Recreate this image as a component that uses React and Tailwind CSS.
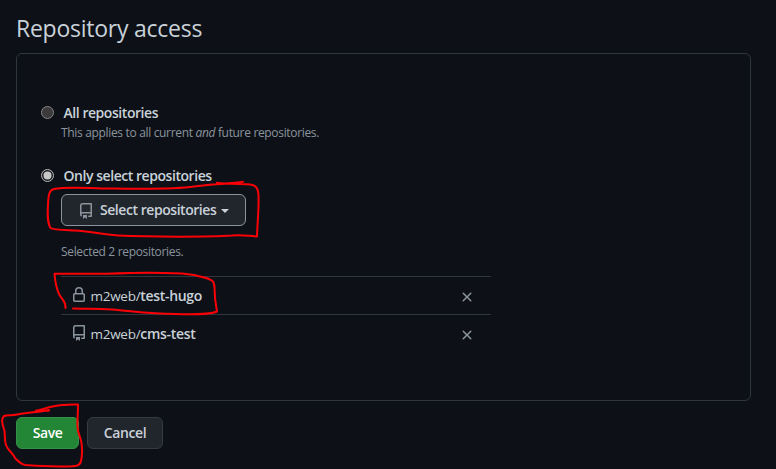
function RepoIcon({ className }) {
  return (
    <svg viewBox="0 0 16 16" width="16" height="16" fill="currentColor" className={className}>
      <path d="M2 2.5A2.5 2.5 0 0 1 4.5 0h8.75a.75.75 0 0 1 .75.75v12.5a.75.75 0 0 1-.75.75h-2.5a.75.75 0 0 1 0-1.5h1.75v-2h-8a1 1 0 0 0-.714 1.7.75.75 0 1 1-1.072 1.05A2.495 2.495 0 0 1 2 11.5Zm10.5-1h-8a1 1 0 0 0-1 1v6.708A2.486 2.486 0 0 1 4.5 9h8ZM5 12.25a.25.25 0 0 1 .25-.25h3.5a.25.25 0 0 1 .25.25v3.25a.25.25 0 0 1-.4.2l-1.45-1.087a.249.249 0 0 0-.3 0L5.4 15.7a.25.25 0 0 1-.4-.2Z" />
    </svg>
  );
}

function LockIcon({ className }) {
  return (
    <svg viewBox="0 0 16 16" width="16" height="16" fill="currentColor" className={className}>
      <path d="M4 4a4 4 0 0 1 8 0v2h.25c.966 0 1.75.784 1.75 1.75v5.5A1.75 1.75 0 0 1 12.25 15h-8.5A1.75 1.75 0 0 1 2 13.25v-5.5C2 6.784 2.784 6 3.75 6H4Zm8.25 3.5h-8.5a.25.25 0 0 0-.25.25v5.5c0 .138.112.25.25.25h8.5a.25.25 0 0 0 .25-.25v-5.5a.25.25 0 0 0-.25-.25ZM10.5 6V4a2.5 2.5 0 1 0-5 0v2Z" />
    </svg>
  );
}

function CloseIcon() {
  return (
    <svg viewBox="0 0 16 16" width="16" height="16" fill="currentColor">
      <path d="M3.72 3.72a.75.75 0 0 1 1.06 0L8 6.94l3.22-3.22a.749.749 0 0 1 1.275.326.749.749 0 0 1-.215.734L9.06 8l3.22 3.22a.749.749 0 0 1-.326 1.275.749.749 0 0 1-.734-.215L8 9.06l-3.22 3.22a.751.751 0 0 1-1.042-.018.751.751 0 0 1-.018-1.042L6.94 8 3.72 4.78a.75.75 0 0 1 0-1.06Z" />
    </svg>
  );
}

function Radio({ checked }) {
  return (
    <svg viewBox="0 0 13 13" width="13" height="13" className="mb-0.5 shrink-0">
      <circle cx="6.5" cy="6.5" r="6" fill={checked ? "#1d1f22" : "#3b3b3b"} stroke={checked ? "#b4b6b8" : "#858585"} />
      {checked && <circle cx="6.5" cy="6.5" r="4" fill="#c8c8c8" />}
    </svg>
  );
}

function RepoRow({ icon, name }) {
  return (
    <li className="flex h-[38px] items-center border-t border-[#30363d] pr-4 pl-2.5">
      <span className="mb-px text-[#8b949e]">{icon}</span>
      <span className="mt-px ml-[3.5px] flex-1 text-[13.5px] tracking-[-0.27px]">
        m2web/<b className="text-[14px] font-semibold tracking-[-0.32px]">{name}</b>
      </span>
      <span className="mt-[3px] text-[#8b949e]"><CloseIcon /></span>
    </li>
  );
}

function Scribbles() {
  return (
    <svg viewBox="0 0 776 469" className="pointer-events-none absolute inset-0 h-[469px] w-[776px]" fill="none" stroke="#fb0007" strokeWidth="2" strokeLinecap="round" strokeLinejoin="round">
      <path d="M217 182.7C225 184 243 184 250 184.5C256 185 258 188 258.5 195C259 210 257.5 220 257 236.5C248 236 242 234.500 232 235.500C210 237 150 237 118 235.500C96 234 90 231 75 230.500C64 230 53 230 50.500 228C47 222 47.500 213 48 204C48.500 195 49 190 54 189C68 186 90 188.500 110 188.500C145 189 175 189.500 194 186.500C210 184.500 226 184 243 181.700" />
      <path d="M65.500 308C66 301 62 300 59 294C56 287 55 281 54.500 273.700C80 274 105 274 130 273C150 272.500 170 273 182 273.500C193 274 200 276 206 278C212 280 214.500 281 214.500 288C214.500 298 215.500 304 217 311.500C211 314 190 314.500 175 314C150 314 132 311 112 309.500C96 308 85 309 73 308.500" />
      <path d="M49 410.700H36C47 408 52 406 62 405C70 404.300 74 404.700 78 404.500C78 412 77.500 416 77.500 422C76.500 434 80.500 435 81.500 443C82.500 451 82 457 81 461C80 466 76 466.500 66 466.500C50 466 35 466 25 465C20 464 17 460 15 458C13 453 8 451 6 445C4 439 5.500 433 4 429C2 424 1 419 4 416C7 414.500 12 416 17 414.500C27 412 34 413 49 410" />
    </svg>
  );
}

export default function App() {
  return (
    <main className="relative h-[469px] w-[776px] overflow-hidden bg-[#0d1117] px-4 pt-[11px] font-['Open_Sans','Noto_Sans',sans-serif] text-[#c9d1d9]">
      <h1 className="h-[42px] text-[23px] leading-[34px] tracking-[-0.25px]">Repository access</h1>
      <section className="h-[348px] w-[735px] rounded-md border border-[#30363d] pt-[49px] pl-6">
        <label className="flex h-5 items-center gap-[9.5px]">
          <Radio />
          <span className="text-[14px] leading-5 font-semibold tracking-[-0.45px]">All repositories</span>
        </label>
        <p className="ml-5 text-[12px] leading-5 tracking-[-0.33px] text-[#8b949e]">
          This applies to all current <em>and</em> future repositories.
        </p>
        <label className="mt-[23px] flex h-5 items-center gap-[9.5px]">
          <Radio checked />
          <span className="text-[14px] leading-5 font-semibold tracking-[-0.45px]">Only select repositories</span>
        </label>
        <button className="mt-2 ml-5 flex h-8 w-[185px] items-center rounded-md border border-[#8b949e] bg-[#21262d] pl-4 text-[14px] leading-5 font-semibold tracking-[-0.45px]">
          <RepoIcon className="mt-px mr-1.5 text-[#8b949e]" />
          Select repositories
          <span className="mt-px ml-[5px] border-x-4 border-t-4 border-x-transparent border-t-[#c9d1d9]" />
        </button>
        <p className="mt-4 ml-5 text-[12px] leading-5 tracking-[-0.33px] text-[#8b949e]">Selected 2 repositories.</p>
        <ul className="mt-[14px] ml-5 w-[430px]">
          <RepoRow icon={<LockIcon />} name="test-hugo" />
          <RepoRow icon={<RepoIcon />} name="cms-test" />
        </ul>
      </section>
      <div className="mt-4 flex gap-2 text-[14px] leading-5 font-semibold tracking-[-0.42px]">
        <button className="h-8 w-[63px] rounded-md border border-[#35914a] bg-[#238636] text-white">Save</button>
        <button className="h-8 w-[76px] rounded-md border border-[#363b42] bg-[#21262d]">Cancel</button>
      </div>
      <Scribbles />
    </main>
  );
}
